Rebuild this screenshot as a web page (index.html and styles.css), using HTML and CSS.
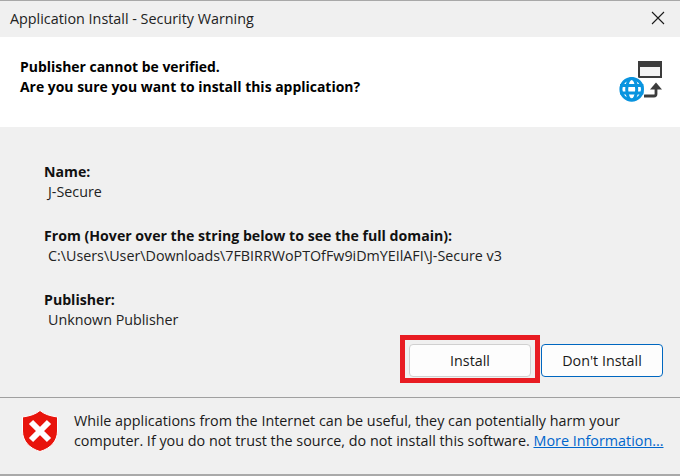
FILE: index.html
```html
<!DOCTYPE html>
<html lang="en">
<head>
<meta charset="utf-8">
<title>Application Install - Security Warning</title>
<link rel="stylesheet" href="styles.css">
</head>
<body>
<div class="dialog">
  <header class="titlebar">
    <span class="title">Application Install - Security Warning</span>
    <svg class="close" width="14" height="14" viewBox="0 0 14 14"><path d="M1 1l12 12M13 1L1 13" stroke="#1a1a1a" stroke-width="1.1" fill="none"/></svg>
  </header>
  <section class="banner">
    <div class="question">
      <p>Publisher cannot be verified.</p>
      <p>Are you sure you want to install this application?</p>
    </div>
    <svg class="appicon" width="46" height="44" viewBox="0 0 46 44">
      <rect x="20" y="1" width="24" height="17" fill="#3c3c3c"/>
      <rect x="22" y="7" width="20" height="9" fill="#f4f4f4"/>
      <path d="M26 36h10q2 0 2-2V26" fill="none" stroke="#3c3c3c" stroke-width="2.800"/>
      <path d="M32 29.500l6-7 6 7z" fill="#3c3c3c"/>
      <circle cx="13.700" cy="29.300" r="13.500" fill="#fff"/>
      <g fill="none" stroke="#0a94df" stroke-width="3">
        <circle cx="13.700" cy="29.300" r="10.800"/>
        <ellipse cx="13.700" cy="29.300" rx="5" ry="10.800"/>
        <path d="M2 25.500h23.400M2 33h23.400"/>
      </g>
    </svg>
  </section>
  <section class="details">
    <dl class="fields">
      <dt>Name:</dt>
      <dd>J-Secure</dd>
      <dt>From (Hover over the string below to see the full domain):</dt>
      <dd>C:\Users\User\Downloads\7FBIRRWoPTOfFw9iDmYEIlAFI\J-Secure v3</dd>
      <dt>Publisher:</dt>
      <dd>Unknown Publisher</dd>
    </dl>
    <div class="actions">
      <div class="highlight"><button class="btn" type="button">Install</button></div>
      <button class="btn btn-default" type="button">Don't Install</button>
    </div>
  </section>
  <footer class="warning">
    <svg class="shield" width="40" height="44" viewBox="0 0 40 44">
      <path d="M20 1.500c4 3.500 10 5.500 17.500 6.500v14c0 10-7 17.500-17.500 20.500C9.500 39.500 2.500 32 2.500 22V8C10 7 16 5 20 1.500z" fill="#e8140c" stroke="#fff" stroke-width="1"/>
      <path d="M11 13l18 18M29 13L11 31" stroke="#fff" stroke-width="6" fill="none"/>
    </svg>
    <p class="warntext">While applications from the Internet can be useful, they can potentially harm your computer. If you do not trust the source, do not install this software. <a href="#">More Information...</a></p>
  </footer>
</div>
</body>
</html>
```
FILE: styles.css
```css
* { box-sizing: border-box; margin: 0; padding: 0; }
html, body { width: 680px; height: 476px; overflow: hidden; }
body {
  background: #a9a9a9;
  font-family: "Open Sans", "Noto Sans", sans-serif;
  font-size: 14.3px;
  color: #111;
}
.dialog {
  display: flex;
  flex-direction: column;
  height: 474px;
  border-top: 1px solid #a8a8a8;
  background: #f0f0f0;
}
.titlebar {
  height: 36px;
  flex: none;
  display: flex;
  align-items: center;
  justify-content: space-between;
  padding: 0 15px 2px 10px;
  background: #f0f0f0;
}
.title { font-size: 14.35px; color: #222; }
.banner {
  height: 90px;
  flex: none;
  display: flex;
  justify-content: space-between;
  background: #fff;
  padding: 20px 16px 0 20px;
}
.question p { font-weight: 700; font-size: 13.95px; line-height: 20px; color: #000; }
.appicon { margin-top: 3px; }
.details {
  height: 270px;
  flex: none;
  padding: 35px 17px 0 44px;
  display: flex;
  flex-direction: column;
}
.fields dt { font-weight: 700; font-size: 14.15px; line-height: 20px; color: #111; }
.fields dd { line-height: 20px; padding-left: 4px; margin-bottom: 24px; color: #222; }
.actions {
  display: flex;
  justify-content: flex-end;
  align-items: flex-end;
  margin-top: -19px;
  gap: 1px;
}
.highlight { display: flex; border: 5px solid #e81c22; padding: 4px 4px 1px 4px; margin-bottom: -6px; }
.btn {
  width: 122px;
  height: 33px;
  font: inherit;
  color: #1a1a1a;
  background: #fdfdfd;
  border: 1px solid #d0d0d0;
  border-radius: 4px;
}
.btn-default { border-color: #0067c0; }
.warning {
  flex: 1;
  display: flex;
  align-items: flex-start;
  border-top: 1px solid #a0a0a0;
  padding: 10px 0 0 20px;
  gap: 14px;
}
.shield { flex: none; margin-top: 1px; }
.warntext { font-size: 14.35px; line-height: 20px; padding-top: 3px; color: #1a1a1a; width: 600px; }
.warntext a { color: #0066cc; }
```
